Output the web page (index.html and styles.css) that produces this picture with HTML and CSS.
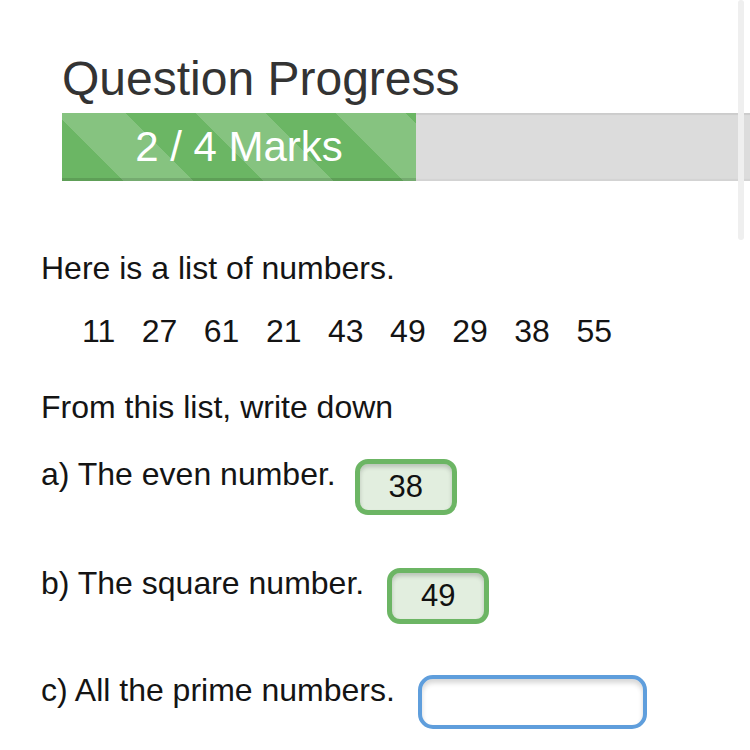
FILE: index.html
```html
<!DOCTYPE html>
<html>
<head>
<meta charset="utf-8">
<link rel="stylesheet" href="styles.css">
</head>
<body>
<div class="scrollbar"></div>
<div class="page">
  <h1 class="title">Question Progress</h1>
  <div class="progress">
    <div class="fill" style="width: 50%;"><span class="marks">2 / 4 Marks</span></div>
  </div>
  <div class="question">
    <p class="intro">Here is a list of numbers.</p>
    <div class="numbers">
      <span>11</span><span>27</span><span>61</span><span>21</span><span>43</span><span>49</span><span>29</span><span>38</span><span>55</span>
    </div>
    <p class="prompt">From this list, write down</p>
    <div class="row row-a">
      <span class="label">a) The even number.</span>
      <div class="answer correct small">38</div>
    </div>
    <div class="row row-b">
      <span class="label">b) The square number.</span>
      <div class="answer correct small">49</div>
    </div>
    <div class="row row-c">
      <span class="label">c) All the prime numbers.</span>
      <div class="answer empty wide"></div>
    </div>
  </div>
</div>
</body>
</html>
```

FILE: styles.css
```css
html, body {
  margin: 0;
  padding: 0;
  overflow: hidden;
  background: #ffffff;
}

body {
  font-family: "Liberation Sans", Arial, Helvetica, sans-serif;
  color: #141414;
  width: 750px;
  height: 750px;
  position: relative;
}

.scrollbar {
  position: absolute;
  left: 738px;
  top: 0;
  width: 6px;
  height: 240px;
  background: #efefef;
  border-radius: 3px;
  z-index: 2;
}

.page {
  padding-top: 52px;
}

.title {
  margin: 0 0 7px 62px;
  font-weight: normal;
  font-size: 48px;
  line-height: 54px;
  color: #333333;
}

.progress {
  margin-left: 62px;
  width: 708px;
  height: 68px;
  background: #dcdcdc;
  box-shadow: inset 0 2px 1px rgba(0, 0, 0, 0.07), inset 0 -2px 1px rgba(0, 0, 0, 0.04);
  display: flex;
}

.fill {
  height: 68px;
  background-color: #6bb664;
  background-image: linear-gradient(45deg,
    rgba(255, 255, 255, 0.18) 25%, transparent 25%,
    transparent 50%, rgba(255, 255, 255, 0.18) 50%,
    rgba(255, 255, 255, 0.18) 75%, transparent 75%, transparent);
  background-size: 140px 140px;
  background-position: -7px 0;
  box-shadow: inset 0 -3px 0 rgba(0, 0, 0, 0.12);
  display: flex;
  align-items: center;
  justify-content: center;
}

.marks {
  color: #ffffff;
  font-size: 42px;
  line-height: 68px;
}

.question {
  padding-left: 41px;
  padding-top: 69px;
}

.intro, .prompt {
  margin: 0;
  font-size: 32px;
  line-height: 36px;
}

.numbers {
  display: flex;
  gap: 26.5px;
  margin: 27px 0 0 41px;
  font-size: 32px;
  line-height: 36px;
}

.prompt {
  margin-top: 40px;
}

.row {
  display: flex;
  align-items: flex-start;
  gap: 23px;
}

.row-a { margin-top: 31px; gap: 19px; }
.row-b { margin-top: 50px; }
.row-c { margin-top: 48px; }

.label {
  font-size: 32px;
  line-height: 36px;
}

.answer {
  box-sizing: border-box;
  margin-top: 3px;
  display: flex;
  align-items: center;
  justify-content: center;
  font-size: 31px;
  color: #111111;
}

.correct {
  border: 5px solid #6cb564;
  border-radius: 13px;
  background: #e2eedf;
  box-shadow: inset 0 3px 4px rgba(0, 0, 0, 0.18);
}

.small {
  width: 102px;
  height: 56px;
}

.empty {
  border: 4px solid #5f9edc;
  border-radius: 15px;
  background: #ffffff;
  box-shadow: inset 0 4px 5px rgba(0, 0, 0, 0.16);
}

.wide {
  width: 229px;
  height: 54px;
}
```
